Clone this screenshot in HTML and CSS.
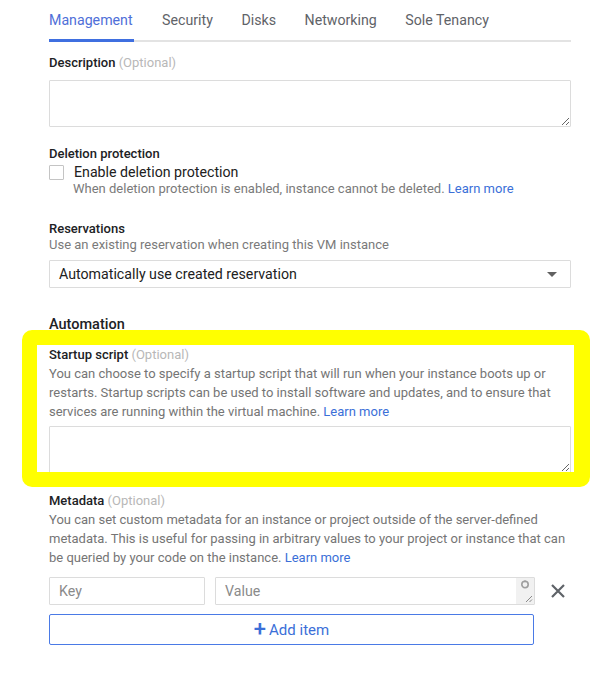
FILE: index.html
```html
<!DOCTYPE html>
<html>
<head>
<meta charset="utf-8">
<link rel="stylesheet" href="styles.css">
</head>
<body>
<div class="page">
  <nav class="tabs">
    <span class="tab active">Management</span>
    <span class="tab">Security</span>
    <span class="tab">Disks</span>
    <span class="tab">Networking</span>
    <span class="tab">Sole Tenancy</span>
  </nav>

  <section class="field first">
    <div class="label">Description <span class="opt">(Optional)</span></div>
    <textarea class="area"></textarea>
  </section>

  <section class="field deletion">
    <div class="label">Deletion protection</div>
    <div class="check-row">
      <span class="checkbox"></span>
      <span class="check-text">Enable deletion protection</span>
    </div>
    <div class="hint indent">When deletion protection is enabled, instance cannot be deleted. <a class="link">Learn more</a></div>
  </section>

  <section class="field reservations">
    <div class="label">Reservations</div>
    <div class="hint tight">Use an existing reservation when creating this VM instance</div>
    <div class="select">
      <span>Automatically use created reservation</span>
      <span class="caret"></span>
    </div>
  </section>

  <section class="automation">
    <div class="heading">Automation</div>
    <div class="label startup">Startup script <span class="opt">(Optional)</span></div>
    <div class="desc">You can choose to specify a startup script that will run when your instance boots up or restarts. Startup scripts can be used to install software and updates, and to ensure that services are running within the virtual machine. <a class="link">Learn more</a></div>
    <textarea class="area"></textarea>
  </section>

  <section class="metadata">
    <div class="label">Metadata <span class="opt">(Optional)</span></div>
    <div class="desc">You can set custom metadata for an instance or project outside of the server-defined metadata. This is useful for passing in arbitrary values to your project or instance that can be queried by your code on the instance. <a class="link">Learn more</a></div>
    <div class="kv-row">
      <div class="input key">Key</div>
      <div class="input value">
        <span>Value</span>
        <span class="scroll">
          <svg class="scroll-up" width="10" height="10" viewBox="0 0 10 10"><circle cx="5" cy="5.5" r="3.2" fill="none" stroke="#9e9e9e" stroke-width="1.6"/><path d="M3 3.2 L5 1 L7 3.2" fill="#9e9e9e"/></svg>
          <svg class="grip" width="9" height="9" viewBox="0 0 9 9"><path d="M8 2 L2 8 M8 5.5 L5.5 8" stroke="#8a8a8a" stroke-width="1"/></svg>
        </span>
      </div>
      <svg class="remove" width="16" height="16" viewBox="0 0 16 16"><path d="M2 2 L14 14 M14 2 L2 14" stroke="#5f6368" stroke-width="2.2"/></svg>
    </div>
    <div class="add-btn"><span class="plus">+</span>Add item</div>
  </section>

  <div class="highlight"></div>
</div>
</body>
</html>
```

FILE: styles.css
```css
html, body {
  margin: 0;
  padding: 0;
  background: #fff;
}
body {
  font-family: Roboto, "Noto Sans", "Liberation Sans", sans-serif;
  color: #212121;
}
.page {
  position: relative;
  width: 522px;
  padding-left: 49px;
}
.tabs {
  display: flex;
  gap: 28.5px;
  height: 40px;
  border-bottom: 2px solid #e3e3e3;
  box-sizing: content-box;
}
.tab {
  font-size: 14.2px;
  color: #5f6368;
  padding-top: 12px;
  box-sizing: border-box;
}
.tab.active {
  color: #4f6fd8;
  border-bottom: 3px solid #3f6fe0;
  margin-bottom: -2px;
  height: 42px;
  padding-right: 1px;
}
.label {
  font-size: 13px;
  font-weight: 500;
  color: #202124;
  line-height: 18px;
}
.opt {
  font-weight: 400;
  color: #b8b8b8;
}
.field.first {
  margin-top: 12px;
}
.area {
  display: block;
  box-sizing: border-box;
  width: 522px;
  height: 47px;
  margin: 8px 0 0;
  border: 1px solid #dcdcdc;
  border-radius: 1px;
  resize: vertical;
  font: inherit;
}
.deletion {
  margin-top: 18px;
}
.check-row {
  display: flex;
  align-items: center;
  height: 18px;
}
.checkbox {
  width: 13px;
  height: 13px;
  border: 1px solid #c4c4c4;
  border-radius: 1px;
  margin-right: 10px;
}
.check-text {
  font-size: 14.2px;
  color: #212121;
}
.hint {
  font-size: 13px;
  color: #7a7a7a;
  line-height: 18px;
}
.indent {
  margin-left: 24px;
  margin-top: -1px;
}
.hint.tight {
  margin-top: -2px;
}
.link {
  color: #3b6fd8;
}
.reservations {
  margin-top: 22px;
}
.select {
  box-sizing: border-box;
  height: 28px;
  margin-top: 6px;
  border: 1px solid #dcdcdc;
  border-radius: 1px;
  display: flex;
  align-items: center;
  justify-content: space-between;
  padding: 0 13px 0 9px;
  font-size: 14.2px;
  color: #212121;
}
.caret {
  width: 0;
  height: 0;
  border-left: 5px solid transparent;
  border-right: 5px solid transparent;
  border-top: 5px solid #616161;
}
.automation {
  margin-top: 28px;
}
.heading {
  font-size: 14.5px;
  font-weight: 500;
  color: #202124;
  line-height: 18px;
}
.startup {
  margin-top: 12px;
}
.desc {
  font-size: 13px;
  color: #757575;
  line-height: 19px;
}
.automation .area {
  margin-top: 5px;
}
.metadata {
  margin-top: 19px;
}
.kv-row {
  display: flex;
  align-items: center;
  gap: 10px;
  margin-top: 10px;
}
.input {
  box-sizing: border-box;
  height: 28px;
  border: 1px solid #dcdcdc;
  border-radius: 1px;
  font-size: 14.2px;
  color: #8a8a8a;
  display: flex;
  align-items: center;
  padding-left: 9px;
}
.key {
  width: 156px;
}
.value {
  width: 320px;
  justify-content: space-between;
  padding-right: 0;
}
.scroll {
  width: 18px;
  height: 26px;
  background: #f1f1f1;
  display: flex;
  flex-direction: column;
  align-items: center;
  justify-content: space-between;
  padding: 1px 0;
  box-sizing: border-box;
}
.grip {
  align-self: flex-end;
  margin-right: 1px;
}
.remove {
  margin-left: 5px;
}
.add-btn {
  box-sizing: border-box;
  width: 485px;
  height: 31px;
  margin-top: 9px;
  border: 1px solid #4a7ae6;
  border-radius: 2px;
  display: flex;
  align-items: center;
  justify-content: center;
  color: #3b6fd8;
  font-size: 15px;
}
.plus {
  font-size: 22px;
  font-weight: 500;
  margin-right: 3px;
  line-height: 1;
  margin-top: -2px;
}
.highlight {
  position: absolute;
  left: 22px;
  top: 330px;
  width: 568px;
  height: 157px;
  box-sizing: border-box;
  border: 15px solid #ffff00;
  border-right-width: 16px;
  border-radius: 10px;
  pointer-events: none;
}
```
